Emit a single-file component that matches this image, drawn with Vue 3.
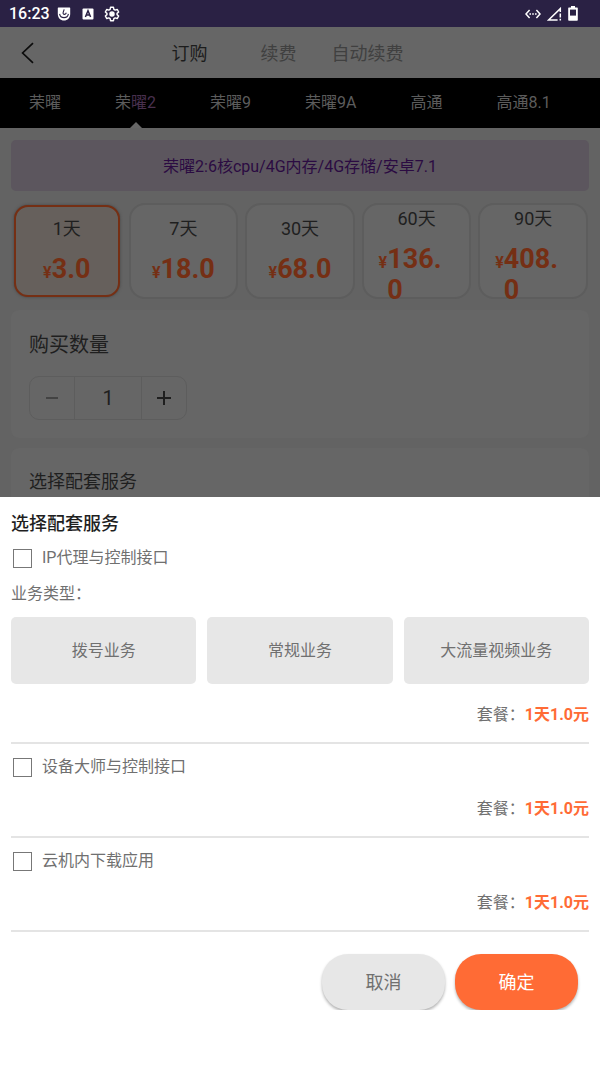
<template>
  <div class="screen">
    <header class="status-bar">
      <span class="clock">16:23</span>
      <svg class="icon-shield" width="14" height="14" viewBox="0 0 14 14">
        <path d="M1.4 0.4h11.2q0.6 0 0.6 0.6v6c0 3.8-2.6 6.4-6.2 6.6c-3.6-0.2-6.2-2.8-6.2-6.6v-6q0-0.6 0.6-0.6z" fill="#fff" />
        <path d="M2.6 6.8c0.4 2.6 2.2 3.8 4.4 3.8s4-1.2 4.4-3.8M7.2 2.4L6.2 5.2c-0.4 1.4 0.2 2.2 1.2 2.2s1.6-0.8 2-1.6" fill="none" stroke="#2a2144" stroke-width="1.1" />
      </svg>
      <svg class="icon-letter" width="12" height="12" viewBox="0 0 12 12">
        <rect x="0.5" y="0.5" width="11" height="11" rx="1" fill="#fff" />
        <path d="M3.4 9L6 2.8L8.6 9M4.4 7h3.2" fill="none" stroke="#2a2144" stroke-width="1.5" />
      </svg>
      <svg class="icon-gear" width="16" height="16" viewBox="0 0 24 24" fill="none" stroke="#fff" stroke-width="2.2" stroke-linejoin="round">
        <path d="M9.8 2h4.4l0.6 3l2 1.2l3-1l2.2 3.8l-2.4 2v2l2.4 2l-2.2 3.8l-3-1l-2 1.2l-0.6 3H9.8l-0.6-3l-2-1.2l-3 1L2 15l2.4-2v-2L2 9l2.2-3.8l3 1l2-1.2z" />
        <circle cx="12" cy="12" r="3" fill="#fff" />
      </svg>
      <div class="status-right">
        <svg width="16" height="10" viewBox="0 0 16 10" fill="none" stroke="#fff" stroke-width="1.5">
          <path d="M4.6 1L1 5l3.6 4M11.4 1L15 5l-3.6 4" />
          <path d="M4.4 5h1.6M7.2 5h1.6M10 5h1.6" />
        </svg>
        <svg width="15" height="14" viewBox="0 0 15 14" fill="none" stroke="#fff" stroke-width="1.5">
          <path d="M10.6 13H1.6L13.3 1.6V5" />
          <path d="M13.3 6.4v4.2M13.3 11.8v1.6" />
        </svg>
        <svg width="10" height="15" viewBox="0 0 10 15">
          <path d="M3 0h4v1.6h2.2q0.6 0 0.6 0.6v11.8q0 0.8-0.8 0.8H1q-0.8 0-0.8-0.8V2.2q0-0.6 0.6-0.6H3z" fill="#fff" />
          <rect x="2" y="3.6" width="6" height="6" fill="#2a2144" />
        </svg>
      </div>
    </header>

    <nav class="nav-bar">
      <button class="back-btn" aria-label="返回">
        <svg width="13" height="22" viewBox="0 0 13 22" fill="none" stroke="#0c0c0c" stroke-width="1.7">
          <path d="M12 1.2L1.6 11L12 20.8" />
        </svg>
      </button>
      <div class="modes">
        <button v-for="(mode, index) in modes" :key="mode" class="mode-btn" :class="{ active: currentMode === index }"
          @click="currentMode = index">{{ mode }}</button>
      </div>
    </nav>

    <div class="model-tabs">
      <button v-for="(model, index) in models" :key="index" class="model-tab" :class="{ active: currentModel === index }"
        @click="currentModel = index">{{ model.head }}<span class="tail">{{ model.tail }}</span></button>
    </div>

    <main class="content">
      <p class="spec">荣曜2:6核cpu/4G内存/4G存储/安卓7.1</p>

      <div class="plans">
        <button v-for="(plan, index) in plans" :key="plan.days" class="plan" :class="{ active: currentPlan === index }"
          @click="currentPlan = index">
          <span class="plan-body">
            <span class="plan-days">{{ plan.days }}天</span>
            <span class="plan-price"><span class="yen">¥</span><span class="amount">{{ plan.price }}</span></span>
          </span>
        </button>
      </div>

      <section class="card">
        <label class="card-title" for="quantity">购买数量</label>
        <div class="stepper">
          <button class="step minus" aria-label="减少" @click="quantity > 1 && quantity--">
            <svg width="12" height="12" viewBox="0 0 12 12" stroke="currentColor" stroke-width="1.8"><path d="M0 6h12" /></svg>
          </button>
          <input id="quantity" v-model.number="quantity" type="text" />
          <button class="step plus" aria-label="增加" @click="quantity++">
            <svg width="14" height="14" viewBox="0 0 14 14" stroke="currentColor" stroke-width="2"><path d="M0 7h14M7 0v14" /></svg>
          </button>
        </div>
      </section>

      <section class="card services-card">
        <h2>选择配套服务</h2>
      </section>
    </main>

    <section class="sheet">
      <h2 class="sheet-title">选择配套服务</h2>
      <div v-for="service in services" :key="service.name" class="service">
        <label class="check">
          <input v-model="service.checked" type="checkbox" />
          <span>{{ service.name }}</span>
        </label>
        <template v-if="service.types">
          <p class="type-label">业务类型：</p>
          <div class="types">
            <button v-for="type in service.types" :key="type" class="type-btn">{{ type }}</button>
          </div>
        </template>
        <p class="package">套餐：<strong>{{ service.price }}</strong></p>
      </div>
      <footer class="actions">
        <button class="action cancel">取消</button>
        <button class="action confirm">确定</button>
      </footer>
    </section>
  </div>
</template>

<script setup>
import { ref } from 'vue';

const modes = ['订购', '续费', '自动续费'];
const models = [
  { head: '荣曜', tail: '' },
  { head: '荣', tail: '曜2' },
  { head: '荣曜9', tail: '' },
  { head: '荣曜9A', tail: '' },
  { head: '高通', tail: '' },
  { head: '高通8.1', tail: '' }
];
const plans = [
  { days: 1, price: '3.0' },
  { days: 7, price: '18.0' },
  { days: 30, price: '68.0' },
  { days: 60, price: '136.0' },
  { days: 90, price: '408.0' }
];

const currentMode = ref(0);
const currentModel = ref(1);
const currentPlan = ref(0);
const quantity = ref(1);
const services = ref([
  { name: 'IP代理与控制接口', types: ['拨号业务', '常规业务', '大流量视频业务'], price: '1天1.0元', checked: false },
  { name: '设备大师与控制接口', price: '1天1.0元', checked: false },
  { name: '云机内下载应用', price: '1天1.0元', checked: false }
]);
</script>

<style>
body {
  margin: 0;
  background: #fff;
}
</style>

<style scoped>
.screen {
  margin-right: 5px;
  font-family: Roboto, "Noto Sans CJK SC", sans-serif;
  font-size: 16px;
  line-height: 22px;
}

button,
input {
  margin: 0;
  padding: 0;
  border: none;
  background: none;
  font: inherit;
  color: inherit;
}

button {
  cursor: pointer;
}

h2,
p {
  margin: 0;
}

svg {
  display: block;
}

.status-bar {
  display: flex;
  align-items: center;
  height: 27px;
  padding: 0 22px 0 9px;
  background: #2a2144;
  color: #fff;
}

.clock {
  padding-top: 1px;
  font-weight: 500;
}

.icon-shield {
  margin-left: 7px;
}

.icon-letter {
  margin-left: 11px;
}

.icon-gear {
  margin-left: 10px;
}

.status-right {
  display: flex;
  align-items: center;
  gap: 6px;
  margin-left: auto;
}

.nav-bar {
  display: flex;
  align-items: center;
  height: 51px;
  padding-left: 21px;
  background: #666;
}

.modes {
  display: flex;
  margin-left: 111px;
}

.mode-btn {
  width: 89px;
  padding-top: 2px;
  font-size: 18px;
  color: #404040;
}

.mode-btn.active {
  color: #1c1c1c;
}

.model-tabs {
  display: flex;
  height: 50px;
  padding-left: 2px;
  background: #000;
  color: #5c5c5c;
}

.model-tab {
  position: relative;
  padding: 0 27px;
  white-space: nowrap;
}

.model-tab .tail {
  color: #49304f;
}

.model-tab.active::after {
  content: '';
  position: absolute;
  left: 50%;
  bottom: 0;
  margin-left: -6px;
  border: 6px solid transparent;
  border-top: none;
  border-bottom-color: #666;
}

.content {
  padding: 12px 11px 0;
  background: #636363;
}

.spec {
  padding: 16px 0 13px;
  border-radius: 5px;
  background: #5c565e;
  color: #2b0b42;
  text-align: center;
}

.plans {
  display: grid;
  grid-template-columns: repeat(5, 1fr);
  gap: 7px;
  padding: 12px 1px 11px;
}

.plan {
  display: flex;
  flex-direction: column;
  box-sizing: border-box;
  height: 96px;
  padding-top: 2px;
  border: 2px solid #5d5d5d;
  border-radius: 16px;
  background: #666;
  color: #1f1f1f;
}

.plan.active {
  height: 92px;
  margin: 2px;
  border-color: #752f14;
  border-radius: 14px;
  background: #66605c;
  box-shadow: 0 0 3px #444;
}

.plan-body {
  display: flex;
  flex-direction: column;
  gap: 13px;
  align-items: center;
  width: 100%;
  margin: auto 0;
}

.plan-days {
  font-size: 18px;
  line-height: 24px;
}

.plan-price {
  display: flex;
  align-items: baseline;
  max-width: 76px;
  font-weight: 700;
  line-height: 31px;
  text-align: left;
  color: #752f14;
}

.amount {
  font-size: 27px;
  word-break: break-all;
}

.card {
  padding: 21px 18px 18px;
  border-radius: 8px;
  background: #666;
  color: #1f1f1f;
}

.card-title {
  display: block;
  margin-bottom: 17px;
  font-size: 20px;
  line-height: 28px;
}

.stepper {
  display: inline-flex;
  box-sizing: border-box;
  height: 44px;
  border: 1px solid #5d5d5d;
  border-radius: 10px;
  vertical-align: top;
}

.step {
  display: flex;
  align-items: center;
  justify-content: center;
  width: 44px;
}

.minus {
  color: #404040;
}

.stepper input {
  width: 66px;
  border: solid #5d5d5d;
  border-width: 0 1px;
  font-size: 20px;
  text-align: center;
}

.services-card {
  margin-top: 10px;
  padding-bottom: 2px;
  border-radius: 8px 8px 0 0;
}

.services-card h2 {
  font-size: 18px;
  font-weight: 400;
  line-height: 26px;
}

.sheet {
  padding: 16px 11px 59px;
  background: #fff;
  color: #707070;
}

.sheet-title {
  font-size: 18px;
  font-weight: 500;
  color: #1f1f1f;
}

.service {
  padding: 12px 0 16px;
  border-bottom: 2px solid #e4e4e4;
}

.check {
  display: flex;
  gap: 10px;
  align-items: center;
}

.check input {
  appearance: none;
  width: 19px;
  height: 19px;
  margin-left: 2px;
  border: 1px solid #777;
}

.check input:checked {
  background: #ff6b35;
}

.type-label {
  margin: 14px 0 12px;
}

.types {
  display: grid;
  grid-template-columns: repeat(3, 1fr);
  gap: 11px;
}

.type-btn {
  height: 67px;
  border-radius: 5px;
  background: #e7e7e7;
}

.package {
  margin-top: 20px;
  text-align: right;
}

.package strong {
  font-weight: 700;
  color: #ff6b35;
}

.actions {
  display: flex;
  justify-content: flex-end;
  gap: 10px;
  overflow: hidden;
  padding: 22px 11px 0;
}

.action {
  width: 123px;
  height: 56px;
  padding-top: 2px;
  border-radius: 26px;
  font-size: 18px;
  box-shadow: 0 2px 3px rgba(0, 0, 0, 0.3);
}

.cancel {
  background: #e7e7e7;
}

.confirm {
  background: #ff6b35;
  color: #fff;
}
</style>
